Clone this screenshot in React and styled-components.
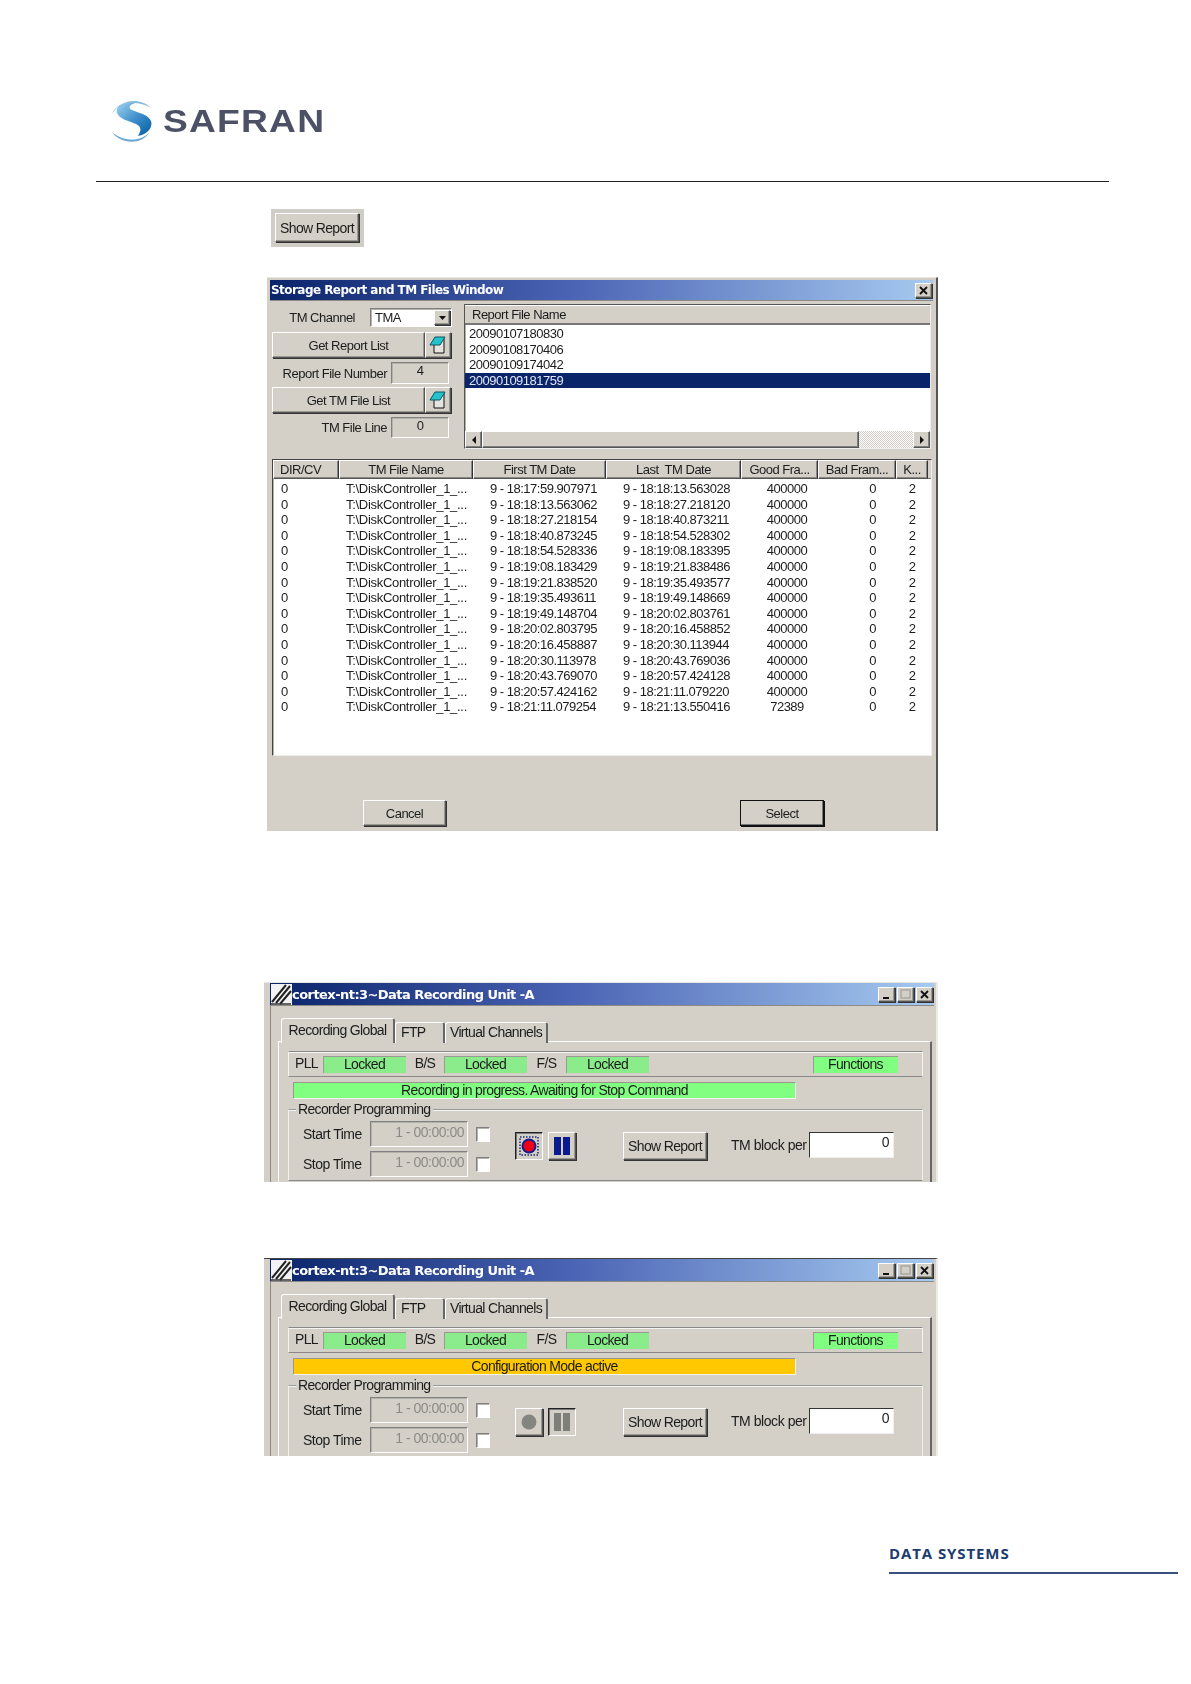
import React from 'react';
import styled, { createGlobalStyle, css } from 'styled-components';

const GlobalStyle = createGlobalStyle`
  html, body { margin: 0; padding: 0; background: #fff; }
  body { font-family: "Liberation Sans", Arial, sans-serif; color: #111; }
`;

const FACE = '#d4d0c8';

const raised = css`
  background: ${FACE};
  border: 1px solid;
  border-color: #fff #555 #555 #fff;
  box-shadow: 1px 1px 0 #333, inset -1px -1px 0 #9a978f;
`;

const sunken = css`
  border: 1px solid;
  border-color: #808080 #fff #fff #808080;
  box-shadow: inset 1px 1px 0 #b5b2aa;
`;

const winText = css`
  font-family: "Liberation Sans", Arial, sans-serif;
  font-size: 13px;
  letter-spacing: -0.5px;
  color: #1c1c1c;
`;

const bigText = css`
  ${winText}
  font-size: 14px;
  letter-spacing: -0.65px;
`;

const Page = styled.div`
  width: 1191px;
  height: 1684px;
  overflow: hidden;
  display: flex;
  flex-direction: column;
  background: #fff;
`;

const Brand = styled.div`
  display: flex;
  align-items: center;
  height: 46px;
  margin: 98px 0 0 112px;
`;

const BrandName = styled.div`
  font-family: "Liberation Sans", Arial, sans-serif;
  font-weight: 700;
  font-size: 31px;
  letter-spacing: 1px;
  color: #4c5166;
  margin: 1px 0 0 11px;
  line-height: 30px;
  transform: scaleX(1.2);
  transform-origin: left center;
`;

const Rule = styled.div`
  height: 1px;
  background: #222;
  margin: 37px 82px 0 96px;
`;

const ButtonShot = styled.div`
  width: 93px;
  height: 38px;
  box-sizing: border-box;
  padding: 4px;
  margin: 27px 0 0 271px;
  background: #d0cdc6;
  filter: blur(0.35px);
`;

const Button = styled.div`
  ${raised}
  ${p => (p.$big ? bigText : winText)}
  box-sizing: border-box;
  width: ${p => p.$w}px;
  height: ${p => p.$h || 26}px;
  margin-left: ${p => p.$ml || 0}px;
  flex: none;
  display: flex;
  align-items: center;
  justify-content: center;
  ${p => p.$default && css`
    outline: 1px solid #111;
    outline-offset: -1px;
    box-shadow: 1px 1px 0 #111, inset -1px -1px 0 #777;
  `}
`;

const Window = styled.div`
  box-sizing: border-box;
  width: ${p => p.$w}px;
  height: ${p => p.$h}px;
  margin: ${p => p.$top}px 0 0 ${p => p.$left}px;
  padding: ${p => p.$pad};
  background: ${FACE};
  border-top: 1px solid ${p => p.$edgeTop};
  border-right: 2px solid ${p => p.$edgeRight};
  overflow: hidden;
  flex: none;
  filter: blur(0.35px);
`;

const TitleBar = styled.div`
  display: flex;
  align-items: center;
  height: ${p => p.$h}px;
  padding: 0 1px 0 1px;
  background: linear-gradient(90deg, #0a246a, #4a63b4 45%, #a6caf0);
  color: #fff;
  font-family: "DejaVu Sans", sans-serif;
  font-weight: 700;
  font-size: ${p => p.$size}px;
  letter-spacing: -0.55px;
  border-bottom: 1px solid #8c8a84;
`;

const TitleText = styled.span`
  flex: 1;
  white-space: nowrap;
`;

const CaptionButton = styled.div`
  ${raised}
  box-sizing: border-box;
  width: 17px;
  height: 15px;
  margin-left: 2px;
  display: flex;
  align-items: center;
  justify-content: center;
`;

const TopPane = styled.div`
  display: flex;
  padding: 3px 2px 0 2px;
`;

const LeftColumn = styled.div`
  width: 180px;
  display: flex;
  flex-direction: column;
`;

const FormRow = styled.div`
  display: flex;
  align-items: center;
  height: ${p => p.$h}px;
  margin-top: ${p => p.$top}px;
`;

const FormLabel = styled.div`
  ${winText}
  width: ${p => p.$w}px;
  flex: none;
  text-align: right;
  padding-right: ${p => p.$pad}px;
  box-sizing: border-box;
  white-space: nowrap;
`;

const Combo = styled.div`
  ${sunken}
  ${winText}
  box-sizing: border-box;
  width: 82px;
  height: 19px;
  background: #fff;
  padding-left: 4px;
  display: flex;
  align-items: center;
  justify-content: space-between;
`;

const ComboArrow = styled.div`
  ${raised}
  box-sizing: border-box;
  width: 16px;
  height: 15px;
  margin-right: 1px;
  display: flex;
  align-items: center;
  justify-content: center;
`;

const ValueBox = styled.div`
  ${sunken}
  ${winText}
  box-sizing: border-box;
  width: 58px;
  height: 100%;
  text-align: center;
  line-height: 15px;
`;

const ListPanel = styled.div`
  ${sunken}
  border-color: #555 #eee #eee #555;
  box-sizing: border-box;
  width: 470px;
  height: 145px;
  margin-left: 12px;
  background: #fff;
  display: flex;
  flex-direction: column;
`;

const ColumnHead = styled.div`
  ${winText}
  height: 17px;
  flex: none;
  display: flex;
  align-items: center;
  padding-left: 7px;
  background: ${FACE};
  border-top: 1px solid #fff;
  border-bottom: 2px solid #777;
`;

const ListRows = styled.div`
  flex: 1;
  padding-top: 1px;
`;

const ListRow = styled.div`
  ${winText}
  height: 15.6px;
  line-height: 15.6px;
  padding-left: 4px;
  ${p => p.$selected && css`
    background: #0a246a;
    color: #dfe6f5;
  `}
`;

const ScrollBar = styled.div`
  height: 17px;
  flex: none;
  display: grid;
  grid-template-columns: 17px 1fr 54px 17px;
  background: repeating-conic-gradient(#fff 0 25%, ${FACE} 0 50%) 0 0 / 2px 2px;
`;

const ScrollPart = styled.div`
  ${raised}
  box-shadow: inset -1px -1px 0 #808080;
  display: flex;
  align-items: center;
  justify-content: center;
`;

const Grip = styled.div``;

const FileTable = styled.div`
  ${sunken}
  border-color: #444 #eee #eee #444;
  box-sizing: border-box;
  width: 660px;
  height: 297px;
  margin: 10px 0 0 2px;
  background: #fff;
`;

const TableHead = styled.div`
  display: grid;
  grid-template-columns: 66px 134px 133px 135px 77px 78px 32px 1fr;
  height: 19px;
  background: ${FACE};
  box-shadow: inset 0 -1px 0 #777;
`;

const HeadCell = styled.div`
  ${raised}
  ${winText}
  box-shadow: inset -1px -1px 0 #888;
  border-right-color: #333;
  display: flex;
  align-items: center;
  justify-content: ${p => (p.$left ? 'flex-start' : 'center')};
  padding-left: ${p => (p.$left ? 6 : 0)}px;
  overflow: hidden;
  white-space: nowrap;
`;

const TableBody = styled.div`
  padding-top: 2px;
`;

const TableRow = styled.div`
  display: grid;
  grid-template-columns: 66px 134px 133px 135px 77px 78px 32px;
  height: 15.6px;
  line-height: 15.6px;
`;

const Cell = styled.div`
  ${winText}
  letter-spacing: ${p => p.$track || -0.5}px;
  white-space: nowrap;
  padding-left: ${p => p.$pad || 0}px;
  text-align: ${p => (p.$center ? 'center' : 'left')};
`;

const DialogActions = styled.div`
  display: flex;
  padding: 44px 0 0 93px;
  gap: 294px;
`;

const InnerFrame = styled.div`
  border-left: 1px solid #8c8a84;
  height: 100%;
  padding: 12px 0 0 7px;
`;

const TabStrip = styled.div`
  display: flex;
  align-items: flex-end;
  height: 25px;
  padding-left: 3px;
`;

const Tab = styled.div`
  ${bigText}
  box-sizing: border-box;
  width: ${p => p.$w}px;
  height: ${p => (p.$active ? 25 : 21)}px;
  padding: 0 0 3px ${p => p.$pad || 0}px;
  display: flex;
  align-items: center;
  justify-content: ${p => (p.$pad ? 'flex-start' : 'center')};
  background: ${FACE};
  border-top: 1px solid #fff;
  border-left: 1px solid #fff;
  border-right: 2px solid #666;
  border-radius: 3px 3px 0 0;
  position: relative;
  z-index: ${p => (p.$active ? 1 : 0)};
`;

const TabPanel = styled.div`
  margin-top: -2px;
  border-top: 1px solid #fff;
  border-left: 1px solid #fff;
  border-right: 2px solid #666;
  padding: 9px 8px 0 9px;
  width: 654px;
  box-sizing: border-box;
  height: 160px;
`;

const StatusRow = styled.div`
  box-sizing: border-box;
  width: 635px;
  height: 26px;
  border: 1px solid;
  border-color: #888 #f4f4f0 #888 #f4f4f0;
  box-shadow: inset 0 1px 0 #f4f4f0;
  padding: 4px 0 0 1px;
  display: grid;
  grid-template-columns: 33px 83px 38px 83px 39px 83px 164px 85px;
  align-items: stretch;
`;

const StatusLabel = styled.div`
  ${bigText}
  text-align: center;
  line-height: 15px;
`;

const Lamp = styled.div`
  ${bigText}
  height: 17px;
  line-height: 17px;
  text-align: center;
  box-shadow: inset 1px 1px 0 #9a9a94;
  background: ${p => (p.$solid
    ? '#80ff80'
    : 'repeating-conic-gradient(#70ff70 0 25%, #a4d8a4 0 50%) 0 0 / 2px 2px')};
`;

const MessageBar = styled.div`
  ${bigText}
  box-sizing: border-box;
  width: 503px;
  height: 17px;
  line-height: 15px;
  margin: 5px 0 0 5px;
  text-align: center;
  background: ${p => p.$color};
  border: 1px solid;
  border-color: #9a978f #f4f4f0 #f4f4f0 #9a978f;
`;

const Group = styled.div`
  box-sizing: border-box;
  position: relative;
  width: 635px;
  height: 72px;
  margin-top: 10px;
  border: 1px solid;
  border-color: #999 #f0f0ec #888 #f0f0ec;
  box-shadow: inset 0 1px 0 #f4f4f0;
  display: flex;
  padding-top: 11px;
`;

const Legend = styled.div`
  ${bigText}
  position: absolute;
  top: -9px;
  left: 7px;
  padding: 0 2px;
  background: ${FACE};
`;

const TimeGrid = styled.div`
  display: grid;
  grid-template-columns: 81px 98px 14px;
  row-gap: 4px;
  grid-auto-rows: 26px;
  align-items: center;
`;

const TimeLabel = styled.div`
  ${bigText}
  letter-spacing: -0.5px;
  padding-left: 14px;
`;

const TimeField = styled.div`
  ${sunken}
  ${bigText}
  letter-spacing: -0.5px;
  color: #8d8b86;
  box-sizing: border-box;
  height: 26px;
  line-height: 20px;
  text-align: right;
  padding-right: 3px;
`;

const Check = styled.div`
  ${sunken}
  box-sizing: border-box;
  width: 14px;
  height: 15px;
  margin-left: 8px;
  background: #fff;
`;

const Controls = styled.div`
  display: flex;
  align-items: flex-start;
  margin: 11px 0 0 33px;
`;

const ToolButton = styled.div`
  ${p => (p.$pressed
    ? css`
      background: ${FACE};
      border: 1px solid;
      border-color: #222 #fff #fff #222;
      box-shadow: inset 1px 1px 0 #777;
    `
    : raised)}
  box-sizing: border-box;
  width: 28px;
  height: 28px;
  margin-right: 5px;
  display: flex;
  align-items: center;
  justify-content: center;
  flex: none;
`;

const BlockLabel = styled.div`
  ${bigText}
  letter-spacing: -0.45px;
  margin: 5px 4px 0 24px;
  width: 74px;
  white-space: nowrap;
`;

const BlockInput = styled.div`
  ${bigText}
  box-sizing: border-box;
  width: 85px;
  height: 26px;
  background: #fff;
  border: 1px solid;
  border-color: #333 #eee #eee #333;
  text-align: right;
  padding: 1px 4px 0 0;
`;

const Footer = styled.div`
  margin-top: ${p => p.$top}px;
  padding-left: 889px;
  width: 289px;
`;

const FooterName = styled.div`
  font-family: "Open Sans", "DejaVu Sans", sans-serif;
  font-weight: 700;
  font-size: 15px;
  line-height: 16px;
  letter-spacing: 0.9px;
  color: #1d3c6e;
`;

const FooterLine = styled.div`
  height: 2px;
  margin-top: 11px;
  background: #3a4f7f;
`;

const rows = [
  ['17:59.907971', '18:13.563028', '400000'],
  ['18:13.563062', '18:27.218120', '400000'],
  ['18:27.218154', '18:40.873211', '400000'],
  ['18:40.873245', '18:54.528302', '400000'],
  ['18:54.528336', '19:08.183395', '400000'],
  ['19:08.183429', '19:21.838486', '400000'],
  ['19:21.838520', '19:35.493577', '400000'],
  ['19:35.493611', '19:49.148669', '400000'],
  ['19:49.148704', '20:02.803761', '400000'],
  ['20:02.803795', '20:16.458852', '400000'],
  ['20:16.458887', '20:30.113944', '400000'],
  ['20:30.113978', '20:43.769036', '400000'],
  ['20:43.769070', '20:57.424128', '400000'],
  ['20:57.424162', '21:11.079220', '400000'],
  ['21:11.079254', '21:13.550416', '72389'],
];

const reports = ['20090107180830', '20090108170406', '20090109174042', '20090109181759'];

const SafranMark = () => (
  <svg width="40" height="46" viewBox="0 0 40 46">
    <defs>
      <linearGradient id="safranS" x1="0.1" y1="0.1" x2="0.9" y2="0.9">
        <stop offset="0" stopColor="#8cc4e8" />
        <stop offset="0.5" stopColor="#3f90cc" />
        <stop offset="1" stopColor="#0f66a8" />
      </linearGradient>
    </defs>
    <path d="M0 16C5 4 26 -3 39 10C28 3 10 3 3 12Z" fill="#86bbdd" />
    <path d="M0 34C8 46 29 48 38 34C29 44 11 44 0 34Z" fill="#6ca8d4" />
    <path d="M23 5C10 4 3 9 5 15C7 21 17 23 24 26C30 29 29 33 26 38C36 36 41 29 39 23C36 16 26 15 20 12C16 10 17 7 23 5Z" fill="url(#safranS)" />
  </svg>
);

const CloseGlyph = () => (
  <svg width="9" height="9" viewBox="0 0 9 9">
    <path d="M1 1L8 8M8 1L1 8" stroke="#111" strokeWidth="1.8" />
  </svg>
);

const BookIcon = () => (
  <svg width="20" height="20" viewBox="0 0 20 20">
    <path d="M6 9V18H16V3H13" fill="#e6e4de" stroke="#111" strokeWidth="1" />
    <path d="M2 10L7 2H17L12 10Z" fill="#22c3cc" stroke="#0c5560" strokeWidth="1" />
  </svg>
);

const ArrowIcon = ({ dir }) => {
  const d = { down: 'M0 0H7L3.5 4Z', left: 'M4 0V8L0 4Z', right: 'M0 0V8L4 4Z' }[dir];
  return (
    <svg width={dir === 'down' ? 7 : 4} height={dir === 'down' ? 4 : 8}>
      <path d={d} fill="#111" />
    </svg>
  );
};

const AppGlyph = () => (
  <svg width="21" height="21" viewBox="0 0 21 21">
    <rect width="21" height="21" fill="#f2f2f2" />
    <path d="M1 18L15 1M5 19L19 2M9 20L20 7" stroke="#222" strokeWidth="2" />
    <path d="M0 20H20" stroke="#333" strokeWidth="1.5" />
  </svg>
);

const RecordGlyph = ({ active }) => (active ? (
  <svg width="20" height="20" viewBox="0 0 20 20">
    <rect x="1" y="1" width="18" height="18" fill="none" stroke="#1a2a70" strokeWidth="1.5" strokeDasharray="1.5 1.5" />
    <circle cx="10" cy="10" r="7.5" fill="#10208a" />
    <circle cx="10" cy="10" r="5.5" fill="#f00018" />
  </svg>
) : (
  <svg width="20" height="20" viewBox="0 0 20 20">
    <circle cx="10" cy="10" r="7.5" fill="#858580" />
  </svg>
));

const PauseGlyph = ({ active }) => (
  <svg width="20" height="20" viewBox="0 0 20 20">
    <rect x="2" y="1" width="7" height="18" fill={active ? '#0b1a8c' : '#7f7f7a'} />
    <rect x="11" y="1" width="7" height="18" fill={active ? '#0b1a8c' : '#7f7f7a'} />
  </svg>
);

const StorageWindow = () => (
  <Window $w={671} $h={554} $top={30} $left={267} $pad="2px 3px 0 3px" $edgeTop="#e8e6e0" $edgeRight="#555">
    <TitleBar $h={20} $size={12}>
      <TitleText>Storage Report and TM Files Window</TitleText>
      <CaptionButton><CloseGlyph /></CaptionButton>
    </TitleBar>
    <TopPane>
      <LeftColumn>
        <FormRow $h={19} $top={4}>
          <FormLabel $w={98} $pad={15}>TM Channel</FormLabel>
          <Combo>TMA<ComboArrow><ArrowIcon dir="down" /></ComboArrow></Combo>
        </FormRow>
        <FormRow $h={26} $top={5}>
          <Button $w={153}>Get Report List</Button>
          <Button $w={26}><BookIcon /></Button>
        </FormRow>
        <FormRow $h={22} $top={4}>
          <FormLabel $w={119} $pad={4}>Report File Number</FormLabel>
          <ValueBox>4</ValueBox>
        </FormRow>
        <FormRow $h={26} $top={3}>
          <Button $w={153}>Get TM File List</Button>
          <Button $w={26}><BookIcon /></Button>
        </FormRow>
        <FormRow $h={21} $top={4}>
          <FormLabel $w={119} $pad={4}>TM File Line</FormLabel>
          <ValueBox>0</ValueBox>
        </FormRow>
      </LeftColumn>
      <ListPanel>
        <ColumnHead>Report File Name</ColumnHead>
        <ListRows>
          {reports.map((r, i) => <ListRow key={r} $selected={i === 3}>{r}</ListRow>)}
        </ListRows>
        <ScrollBar>
          <ScrollPart><ArrowIcon dir="left" /></ScrollPart>
          <ScrollPart><Grip /></ScrollPart>
          <Grip />
          <ScrollPart><ArrowIcon dir="right" /></ScrollPart>
        </ScrollBar>
      </ListPanel>
    </TopPane>
    <FileTable>
      <TableHead>
        <HeadCell $left>DIR/CV</HeadCell>
        <HeadCell>TM File Name</HeadCell>
        <HeadCell>First TM Date</HeadCell>
        <HeadCell>Last&nbsp; TM Date</HeadCell>
        <HeadCell>Good Fra...</HeadCell>
        <HeadCell>Bad Fram...</HeadCell>
        <HeadCell>K...</HeadCell>
      </TableHead>
      <TableBody>
        {rows.map(([first, last, good]) => (
          <TableRow key={first}>
            <Cell $pad={8}>0</Cell>
            <Cell $pad={7} $track={-0.3}>T:\DiskController_1_...</Cell>
            <Cell $pad={17}>9 - 18:{first}</Cell>
            <Cell $pad={17}>9 - 18:{last}</Cell>
            <Cell $center $pad={15}>{good}</Cell>
            <Cell $center $pad={31}>0</Cell>
            <Cell $center>2</Cell>
          </TableRow>
        ))}
      </TableBody>
    </FileTable>
    <DialogActions>
      <Button $w={83}>Cancel</Button>
      <Button $w={84} $default>Select</Button>
    </DialogActions>
  </Window>
);

const RecordingWindow = ({ top, height, message, color, active, edgeTop }) => (
  <Window $w={674} $h={height} $top={top} $left={264} $pad="0 2px 0 6px" $edgeTop={edgeTop} $edgeRight="#ecebe6">
    <TitleBar $h={22} $size={13}>
      <AppGlyph />
      <TitleText>cortex-nt:3~Data Recording Unit -A</TitleText>
      <CaptionButton><svg width="9" height="9"><path d="M1 8H7" stroke="#111" strokeWidth="2" /></svg></CaptionButton>
      <CaptionButton><svg width="11" height="10"><rect x="1" y="1" width="9" height="8" fill="none" stroke="#a8a69f" strokeWidth="1.4" /></svg></CaptionButton>
      <CaptionButton><CloseGlyph /></CaptionButton>
    </TitleBar>
    <InnerFrame>
      <TabStrip>
        <Tab $active $w={114}>Recording Global</Tab>
        <Tab $w={50} $pad={5}>FTP</Tab>
        <Tab $w={103}>Virtual Channels</Tab>
      </TabStrip>
      <TabPanel>
        <StatusRow>
          <StatusLabel>PLL</StatusLabel>
          <Lamp>Locked</Lamp>
          <StatusLabel>B/S</StatusLabel>
          <Lamp>Locked</Lamp>
          <StatusLabel>F/S</StatusLabel>
          <Lamp>Locked</Lamp>
          <span />
          <Lamp $solid>Functions</Lamp>
        </StatusRow>
        <MessageBar $color={color}>{message}</MessageBar>
        <Group>
          <Legend>Recorder Programming</Legend>
          <TimeGrid>
            <TimeLabel>Start Time</TimeLabel>
            <TimeField>1 - 00:00:00</TimeField>
            <Check />
            <TimeLabel>Stop Time</TimeLabel>
            <TimeField>1 - 00:00:00</TimeField>
            <Check />
          </TimeGrid>
          <Controls>
            <ToolButton $pressed={active}><RecordGlyph active={active} /></ToolButton>
            <ToolButton $pressed={!active}><PauseGlyph active={active} /></ToolButton>
            <Button $big $w={84} $h={28} $ml={42}>Show Report</Button>
            <BlockLabel>TM block per</BlockLabel>
            <BlockInput>0</BlockInput>
          </Controls>
        </Group>
      </TabPanel>
    </InnerFrame>
  </Window>
);

export default function App() {
  return (
    <Page>
      <GlobalStyle />
      <Brand>
        <SafranMark />
        <BrandName>SAFRAN</BrandName>
      </Brand>
      <Rule />
      <ButtonShot><Button $big $w={84} $h={29}>Show Report</Button></ButtonShot>
      <StorageWindow />
      <RecordingWindow top={151} height={200} active color="#80ff80" edgeTop="#e8e6e0" message="Recording in progress. Awaiting for Stop Command" />
      <RecordingWindow top={76} height={198} color="#ffc800" edgeTop="#444" message="Configuration Mode active" />
      <Footer $top={89}>
        <FooterName>DATA SYSTEMS</FooterName>
        <FooterLine />
      </Footer>
    </Page>
  );
}
